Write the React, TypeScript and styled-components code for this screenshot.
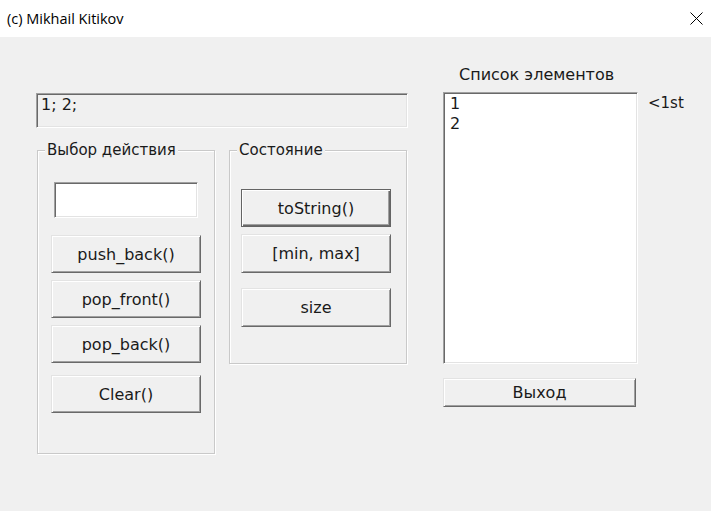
import React from "react";
import styled, { createGlobalStyle, css } from "styled-components";

const Global = createGlobalStyle`
  html, body { margin: 0; padding: 0; background: #f0f0f0; }
  body { font-family: "DejaVu Sans", "Noto Sans", sans-serif; color: #000; }
  * { box-sizing: border-box; }
`;

const raised = css`
  border: 1px solid;
  border-color: #e3e3e3 #696969 #696969 #e3e3e3;
  box-shadow: inset 1px 1px 0 #fff, inset -1px -1px 0 #a0a0a0;
`;

const sunken = css`
  border: 1px solid;
  border-color: #a0a0a0 #fff #fff #a0a0a0;
  box-shadow: inset 1px 1px 0 #696969, inset -1px -1px 0 #e3e3e3;
`;

const Window = styled.div`
  width: 711px;
  height: 511px;
  display: flex;
  flex-direction: column;
  background: #f0f0f0;
  overflow: hidden;
`;

const TitleBar = styled.div`
  height: 37px;
  flex: none;
  background: #fff;
  display: flex;
  align-items: center;
  justify-content: space-between;
  padding: 0 8px 0 7px;
  font-family: "Open Sans", "Noto Sans", sans-serif;
  font-size: 14.5px;
  color: #000;
`;

const Body = styled.div`
  flex: 1;
  display: flex;
  align-items: flex-start;
  padding-left: 36px;
`;

const LeftCol = styled.div`
  width: 372px;
  margin-top: 56px;
  display: flex;
  flex-direction: column;
`;

const OutputBox = styled.div`
  ${sunken};
  height: 35px;
  padding: 2px 0 0 4px;
  font-size: 16px;
  line-height: 18px;
  color: #1a1a1a;
`;

const GroupRow = styled.div`
  display: flex;
  gap: 14px;
  margin-top: 13px;
  padding-left: 1px;
`;

const Group = styled.fieldset<{ $h: number }>`
  margin: 0;
  padding: 0;
  width: 178px;
  min-inline-size: 0;
  height: ${(p) => p.$h}px;
  border: 1px solid #c9c9c9;
  box-shadow: inset 1px 1px 0 #fff, 1px 1px 0 #fff;
`;

const Caption = styled.legend`
  margin-left: 7px;
  padding: 0 2px;
  font-size: 15px;
  line-height: 18px;
  color: #1a1a1a;
  background: #f0f0f0;
`;

const Stack = styled.div<{ $pt: number; $indent: number }>`
  display: flex;
  flex-direction: column;
  align-items: flex-start;
  padding: ${(p) => p.$pt}px 0 0 ${(p) => p.$indent}px;
`;

const Input = styled.div`
  ${sunken};
  background: #fff;
  width: 144px;
  height: 36px;
  margin-left: 3px;
`;

const Button = styled.button<{ $w: number; $h: number; $mt: number; $default?: boolean }>`
  ${raised};
  ${(p) =>
    p.$default &&
    css`
      border: 1px solid #646464;
      box-shadow: inset 1px 1px 0 #fff, inset -1px -1px 0 #696969, inset -2px -2px 0 #a0a0a0;
    `}
  width: ${(p) => p.$w}px;
  height: ${(p) => p.$h}px;
  margin: ${(p) => p.$mt}px 0 0 0;
  padding: 0;
  background: #f0f0f0;
  font-family: "DejaVu Sans", sans-serif;
  font-size: 16px;
  color: #1a1a1a;
  display: flex;
  align-items: center;
  justify-content: center;
`;

const RightCol = styled.div`
  width: 195px;
  margin: 29px 0 0 35px;
  display: flex;
  flex-direction: column;
`;

const ListLabel = styled.div`
  padding-left: 16px;
  font-size: 16px;
  line-height: 18px;
  color: #1a1a1a;
`;

const ListBox = styled.ul`
  ${sunken};
  list-style: none;
  margin: 8px 0 0 0;
  padding: 1px 0 0 6px;
  height: 272px;
  background: #fff;
  font-size: 16px;
  line-height: 20px;
  color: #1a1a1a;
`;

const Item = styled.li`
  margin: 0;
`;

const Note = styled.div`
  margin: 57px 0 0 10px;
  font-size: 15px;
  line-height: 18px;
  color: #1a1a1a;
`;

const CloseIcon = () => (
  <svg width="13" height="13" viewBox="0 0 13 13">
    <path d="M0.5 0.5 L12.5 12.5 M12.5 0.5 L0.5 12.5" stroke="#000" strokeWidth="1" fill="none" />
  </svg>
);

export default function App() {
  return (
    <Window>
      <Global />
      <TitleBar>
        <span>(c) Mikhail Kitikov</span>
        <CloseIcon />
      </TitleBar>
      <Body>
        <LeftCol>
          <OutputBox>1; 2;</OutputBox>
          <GroupRow>
            <Group $h={313}>
              <Caption>Выбор действия</Caption>
              <Stack $pt={23} $indent={13}>
                <Input />
                <Button $w={150} $h={38} $mt={17}>push_back()</Button>
                <Button $w={150} $h={38} $mt={7}>pop_front()</Button>
                <Button $w={150} $h={38} $mt={7}>pop_back()</Button>
                <Button $w={150} $h={38} $mt={12}>Clear()</Button>
              </Stack>
            </Group>
            <Group $h={223}>
              <Caption>Состояние</Caption>
              <Stack $pt={30} $indent={11}>
                <Button $w={150} $h={38} $mt={0} $default>toString()</Button>
                <Button $w={150} $h={39} $mt={7}>[min, max]</Button>
                <Button $w={150} $h={39} $mt={15}>size</Button>
              </Stack>
            </Group>
          </GroupRow>
        </LeftCol>
        <RightCol>
          <ListLabel>Список элементов</ListLabel>
          <ListBox>
            <Item>1</Item>
            <Item>2</Item>
          </ListBox>
          <Button $w={193} $h={29} $mt={14}>Выход</Button>
        </RightCol>
        <Note>&lt;1st</Note>
      </Body>
    </Window>
  );
}
